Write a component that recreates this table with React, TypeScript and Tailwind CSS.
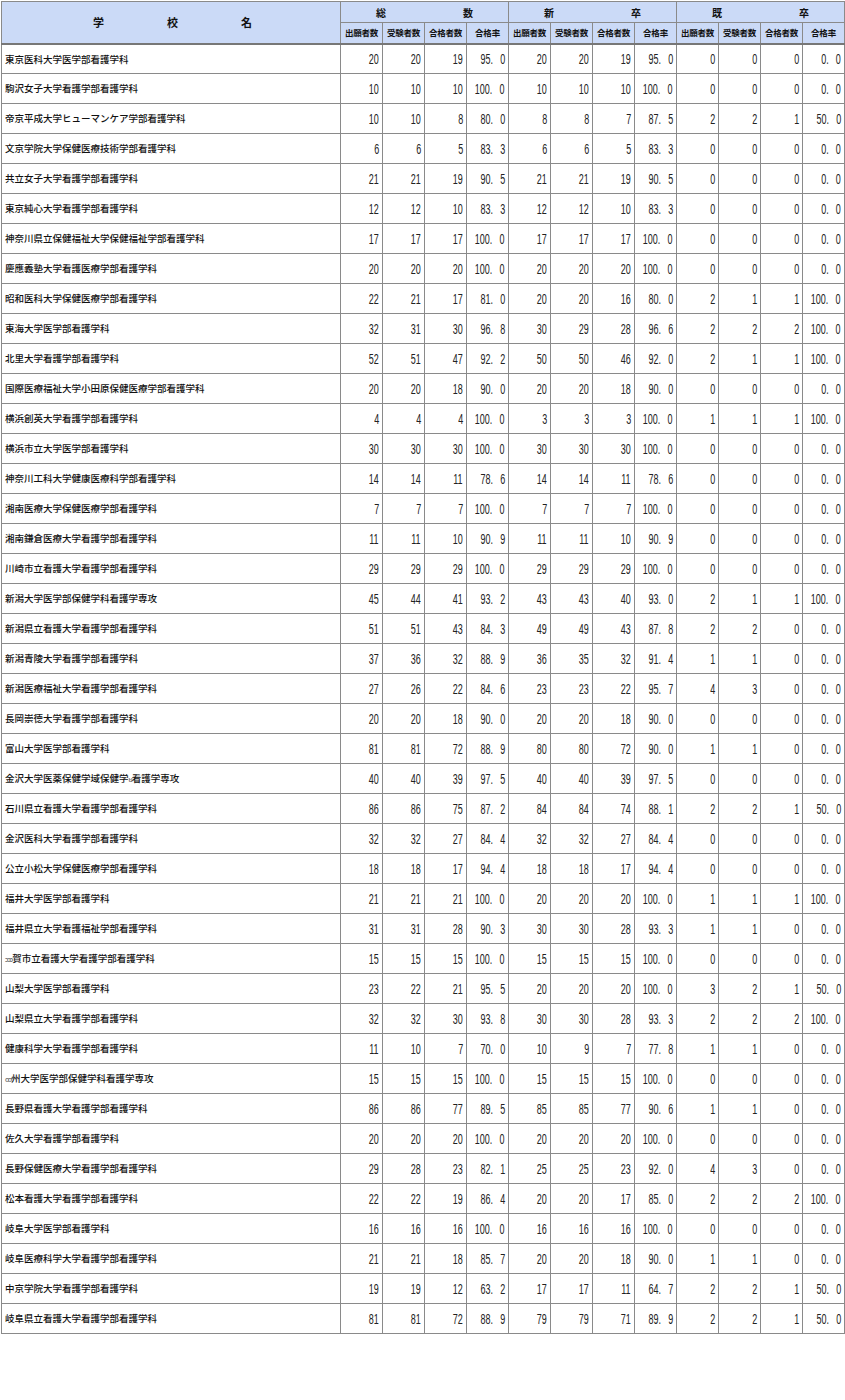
import React from 'react';

type Row = [string, number[], number[], number[]];

// name, 総数, 新卒, 既卒 — [出願者数, 受験者数, 合格者数, 合格率]
const rows: Row[] = [
  ['東京医科大学医学部看護学科', [20, 20, 19, 95.0], [20, 20, 19, 95.0], [0, 0, 0, 0.0]],
  ['駒沢女子大学看護学部看護学科', [10, 10, 10, 100.0], [10, 10, 10, 100.0], [0, 0, 0, 0.0]],
  ['帝京平成大学ヒューマンケア学部看護学科', [10, 10, 8, 80.0], [8, 8, 7, 87.5], [2, 2, 1, 50.0]],
  ['文京学院大学保健医療技術学部看護学科', [6, 6, 5, 83.3], [6, 6, 5, 83.3], [0, 0, 0, 0.0]],
  ['共立女子大学看護学部看護学科', [21, 21, 19, 90.5], [21, 21, 19, 90.5], [0, 0, 0, 0.0]],
  ['東京純心大学看護学部看護学科', [12, 12, 10, 83.3], [12, 12, 10, 83.3], [0, 0, 0, 0.0]],
  ['神奈川県立保健福祉大学保健福祉学部看護学科', [17, 17, 17, 100.0], [17, 17, 17, 100.0], [0, 0, 0, 0.0]],
  ['慶應義塾大学看護医療学部看護学科', [20, 20, 20, 100.0], [20, 20, 20, 100.0], [0, 0, 0, 0.0]],
  ['昭和医科大学保健医療学部看護学科', [22, 21, 17, 81.0], [20, 20, 16, 80.0], [2, 1, 1, 100.0]],
  ['東海大学医学部看護学科', [32, 31, 30, 96.8], [30, 29, 28, 96.6], [2, 2, 2, 100.0]],
  ['北里大学看護学部看護学科', [52, 51, 47, 92.2], [50, 50, 46, 92.0], [2, 1, 1, 100.0]],
  ['国際医療福祉大学小田原保健医療学部看護学科', [20, 20, 18, 90.0], [20, 20, 18, 90.0], [0, 0, 0, 0.0]],
  ['横浜創英大学看護学部看護学科', [4, 4, 4, 100.0], [3, 3, 3, 100.0], [1, 1, 1, 100.0]],
  ['横浜市立大学医学部看護学科', [30, 30, 30, 100.0], [30, 30, 30, 100.0], [0, 0, 0, 0.0]],
  ['神奈川工科大学健康医療科学部看護学科', [14, 14, 11, 78.6], [14, 14, 11, 78.6], [0, 0, 0, 0.0]],
  ['湘南医療大学保健医療学部看護学科', [7, 7, 7, 100.0], [7, 7, 7, 100.0], [0, 0, 0, 0.0]],
  ['湘南鎌倉医療大学看護学部看護学科', [11, 11, 10, 90.9], [11, 11, 10, 90.9], [0, 0, 0, 0.0]],
  ['川崎市立看護大学看護学部看護学科', [29, 29, 29, 100.0], [29, 29, 29, 100.0], [0, 0, 0, 0.0]],
  ['新潟大学医学部保健学科看護学専攻', [45, 44, 41, 93.2], [43, 43, 40, 93.0], [2, 1, 1, 100.0]],
  ['新潟県立看護大学看護学部看護学科', [51, 51, 43, 84.3], [49, 49, 43, 87.8], [2, 2, 0, 0.0]],
  ['新潟青陵大学看護学部看護学科', [37, 36, 32, 88.9], [36, 35, 32, 91.4], [1, 1, 0, 0.0]],
  ['新潟医療福祉大学看護学部看護学科', [27, 26, 22, 84.6], [23, 23, 22, 95.7], [4, 3, 0, 0.0]],
  ['長岡崇徳大学看護学部看護学科', [20, 20, 18, 90.0], [20, 20, 18, 90.0], [0, 0, 0, 0.0]],
  ['富山大学医学部看護学科', [81, 81, 72, 88.9], [80, 80, 72, 90.0], [1, 1, 0, 0.0]],
  ['金沢大学医薬保健学域保健学|類|看護学専攻', [40, 40, 39, 97.5], [40, 40, 39, 97.5], [0, 0, 0, 0.0]],
  ['石川県立看護大学看護学部看護学科', [86, 86, 75, 87.2], [84, 84, 74, 88.1], [2, 2, 1, 50.0]],
  ['金沢医科大学看護学部看護学科', [32, 32, 27, 84.4], [32, 32, 27, 84.4], [0, 0, 0, 0.0]],
  ['公立小松大学保健医療学部看護学科', [18, 18, 17, 94.4], [18, 18, 17, 94.4], [0, 0, 0, 0.0]],
  ['福井大学医学部看護学科', [21, 21, 21, 100.0], [20, 20, 20, 100.0], [1, 1, 1, 100.0]],
  ['福井県立大学看護福祉学部看護学科', [31, 31, 28, 90.3], [30, 30, 28, 93.3], [1, 1, 0, 0.0]],
  ['|敦|賀市立看護大学看護学部看護学科', [15, 15, 15, 100.0], [15, 15, 15, 100.0], [0, 0, 0, 0.0]],
  ['山梨大学医学部看護学科', [23, 22, 21, 95.5], [20, 20, 20, 100.0], [3, 2, 1, 50.0]],
  ['山梨県立大学看護学部看護学科', [32, 32, 30, 93.8], [30, 30, 28, 93.3], [2, 2, 2, 100.0]],
  ['健康科学大学看護学部看護学科', [11, 10, 7, 70.0], [10, 9, 7, 77.8], [1, 1, 0, 0.0]],
  ['|信|州大学医学部保健学科看護学専攻', [15, 15, 15, 100.0], [15, 15, 15, 100.0], [0, 0, 0, 0.0]],
  ['長野県看護大学看護学部看護学科', [86, 86, 77, 89.5], [85, 85, 77, 90.6], [1, 1, 0, 0.0]],
  ['佐久大学看護学部看護学科', [20, 20, 20, 100.0], [20, 20, 20, 100.0], [0, 0, 0, 0.0]],
  ['長野保健医療大学看護学部看護学科', [29, 28, 23, 82.1], [25, 25, 23, 92.0], [4, 3, 0, 0.0]],
  ['松本看護大学看護学部看護学科', [22, 22, 19, 86.4], [20, 20, 17, 85.0], [2, 2, 2, 100.0]],
  ['岐阜大学医学部看護学科', [16, 16, 16, 100.0], [16, 16, 16, 100.0], [0, 0, 0, 0.0]],
  ['岐阜医療科学大学看護学部看護学科', [21, 21, 18, 85.7], [20, 20, 18, 90.0], [1, 1, 0, 0.0]],
  ['中京学院大学看護学部看護学科', [19, 19, 12, 63.2], [17, 17, 11, 64.7], [2, 2, 1, 50.0]],
  ['岐阜県立看護大学看護学部看護学科', [81, 81, 72, 88.9], [79, 79, 71, 89.9], [2, 2, 1, 50.0]],
];

const jp = "font-['Noto_Sans_CJK_JP','Noto_Sans',sans-serif]";
const line = 'border border-[#8a8a8a]';

// characters the source page could not render show up as a tiny fallback glyph
const Name = ({ text }: { text: string }) => {
  const parts = text.split('|');
  return (
    <>
      {parts.map((p, i) =>
        i % 2 === 1 ? (
          <span key={i} className="text-[7px] text-[#666] tracking-[-1px] align-middle">
            {p === '敦' ? 'ɔɔɔ' : p === '信' ? 'ꝏ' : 'ꞟ'}
          </span>
        ) : (
          <span key={i}>{p}</span>
        )
      )}
    </>
  );
};

const Num = ({ v, rate }: { v: number; rate?: boolean }) => {
  const [a, b] = v.toFixed(1).split('.');
  return (
    <td className={`${line} pr-[3px] align-middle`}>
      <div className="flex justify-end">
        <span className="shrink-0 origin-right scale-x-[0.6] font-['Liberation_Sans',Arial,sans-serif] text-[15px] leading-none text-[#222] whitespace-pre tabular-nums">
          {rate ? (
            <>
              {a}.<span className="ml-[0.8em]">{b}</span>
            </>
          ) : (
            String(v)
          )}
        </span>
      </div>
    </td>
  );
};

const Spread = ({ chars, className }: { chars: string[]; className: string }) => (
  <div className={`flex justify-between ${className}`}>
    {chars.map((c) => (
      <span key={c}>{c}</span>
    ))}
  </div>
);

export default function App() {
  const subHeads = ['出願者数', '受験者数', '合格者数', '合格率'];
  const groups = [
    ['総', '数'],
    ['新', '卒'],
    ['既', '卒'],
  ];

  return (
    <div className="bg-white min-h-[1400px] pt-px pl-px">
      <table className={`border-collapse table-fixed w-[843px] ${jp} text-[#111]`}>
        <colgroup>
          <col className="w-[339px]" />
          {Array.from({ length: 12 }).map((_, i) => (
            <col key={i} className="w-[42px]" />
          ))}
        </colgroup>
        <thead>
          <tr className="h-[21px] bg-[#cbdaf7]">
            <th rowSpan={2} className={`${line} border-b-2 border-b-[#777] font-bold text-[11px] p-0`}>
              <Spread chars={['学', '校', '名']} className="pl-[91px] pr-[88px]" />
            </th>
            {groups.map((g, i) => (
              <th key={i} colSpan={4} className={`${line} font-bold text-[10px] p-0`}>
                <Spread chars={g} className="px-[35px]" />
              </th>
            ))}
          </tr>
          <tr className="h-[21px] bg-[#cbdaf7]">
            {groups.flatMap((_, gi) =>
              subHeads.map((s) => (
                <th
                  key={`${gi}-${s}`}
                  className={`${line} border-b-2 border-b-[#777] font-bold text-[8.5px] tracking-[-0.2px] p-0 whitespace-nowrap`}
                >
                  {s}
                </th>
              ))
            )}
          </tr>
        </thead>
        <tbody>
          {rows.map(([name, total, fresh, past]) => (
            <tr key={name} className="h-[30px]">
              <td className={`${line} text-left pl-[3px] text-[9.5px] font-medium align-middle whitespace-nowrap`}>
                <Name text={name} />
              </td>
              {[total, fresh, past].flatMap((g, gi) =>
                g.map((v, i) => <Num key={`${gi}-${i}`} v={v} rate={i === 3} />)
              )}
            </tr>
          ))}
        </tbody>
      </table>
    </div>
  );
}
